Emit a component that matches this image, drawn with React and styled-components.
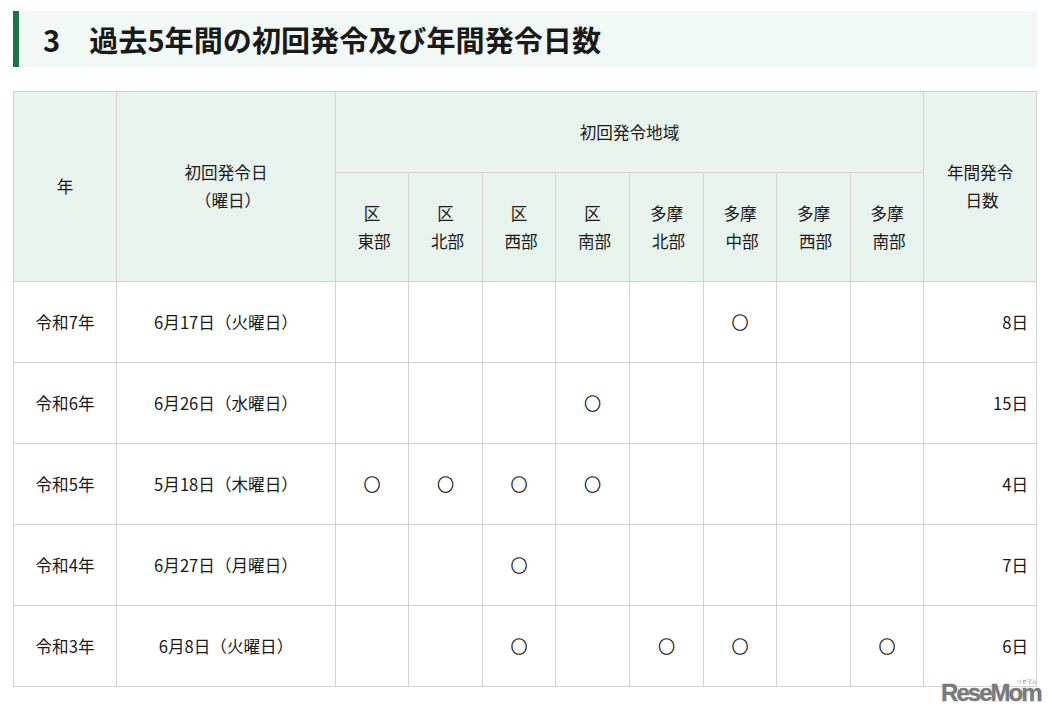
import React from 'react';
import styled, { createGlobalStyle } from 'styled-components';

const Global = createGlobalStyle`
  html, body { margin: 0; padding: 0; background: #fff; }
  body { font-family: "Noto Sans CJK JP", "Noto Sans", sans-serif; color: #1a1a1a; }
`;
const Page = styled.div`
  position: relative;
  width: 1052px;
  height: 715px;
  box-sizing: border-box;
  padding: 11px 15px 0 13px;
  overflow: hidden;
`;
const Heading = styled.h2`
  margin: 0 0 24px;
  height: 56px;
  box-sizing: border-box;
  padding: 2px 0 0 24px;
  background: #f1f8f5;
  border-left: 6px solid #1f7349;
  display: flex;
  align-items: center;
  font-size: 29.1px;
  font-weight: 700;
  line-height: 1;
  color: #1a1a1a;
  white-space: pre;
`;
const Table = styled.table`
  width: 1023px;
  border-collapse: collapse;
  table-layout: fixed;
  font-size: 16.6px;
  line-height: 28px;
`;
const Head = styled.th`
  background: #e9f3ee;
  border: 1px solid #d2d2d2;
  font-weight: 400;
  text-align: center;
  padding: 0;
  height: ${p => p.$h || 80}px;
  ${p => p.$shift ? `padding-bottom: ${p.$shift}px;` : ''}
`;
const SecondLine = styled.span`
  display: block;
  padding-left: 4px;
`;
const Cell = styled.td`
  border: 1px solid #d2d2d2;
  height: 80px;
  padding: ${p => p.$right ? '0 8px 0 0' : '0'};
  text-align: ${p => p.$right ? 'right' : 'center'};
`;
const Mark = styled.span`
  -webkit-text-stroke: 0.45px #1a1a1a;
`;
const Logo = styled.div`
  position: absolute;
  left: 941px;
  top: 684px;
  color: #7a7a7a;
  font-family: "Liberation Sans", sans-serif;
  font-weight: 700;
  font-size: 24px;
  line-height: 18px;
  letter-spacing: -1.95px;
  -webkit-text-stroke: 0.4px #7a7a7a;
  white-space: nowrap;
`;
const LogoKana = styled.span`
  position: absolute;
  right: 4px;
  top: -6px;
  font-family: "Noto Sans CJK JP", sans-serif;
  font-size: 5px;
  line-height: 5px;
  font-weight: 400;
  letter-spacing: 0;
  -webkit-text-stroke: 0;
`;

const widths = [103, 219, 73, 74, 73, 74, 74, 73, 74, 73, 113];
const areas = [['区', '東部'], ['区', '北部'], ['区', '西部'], ['区', '南部'], ['多摩', '北部'], ['多摩', '中部'], ['多摩', '西部'], ['多摩', '南部']];
const rows = [
  ['令和7年', '6月17日（火曜日）', [5], '8日'],
  ['令和6年', '6月26日（水曜日）', [3], '15日'],
  ['令和5年', '5月18日（木曜日）', [0, 1, 2, 3], '4日'],
  ['令和4年', '6月27日（月曜日）', [2], '7日'],
  ['令和3年', '6月8日（火曜日）', [2, 4, 5, 7], '6日'],
];

export default function App() {
  return (
    <Page>
      <Global />
      <Heading>{'3　過去5年間の初回発令及び年間発令日数'}</Heading>
      <Table>
        <colgroup>{widths.map((w, i) => <col key={i} style={{ width: w }} />)}</colgroup>
        <thead>
          <tr>
            <Head rowSpan={2} $shift={2}>年</Head>
            <Head rowSpan={2} $shift={2}>初回発令日<SecondLine>（曜日）</SecondLine></Head>
            <Head colSpan={8}>初回発令地域</Head>
            <Head rowSpan={2} $shift={2}>年間発令<SecondLine>日数</SecondLine></Head>
          </tr>
          <tr>
            {areas.map(([a, b], i) => <Head key={i} $h={108}>{a}<SecondLine>{b}</SecondLine></Head>)}
          </tr>
        </thead>
        <tbody>
          {rows.map(([y, d, marks, n]) => (
            <tr key={y}>
              <Cell>{y}</Cell>
              <Cell>{d}</Cell>
              {areas.map((_, i) => <Cell key={i}>{marks.includes(i) ? <Mark>○</Mark> : null}</Cell>)}
              <Cell $right>{n}</Cell>
            </tr>
          ))}
        </tbody>
      </Table>
      <Logo>ReseMom<LogoKana>リセマム</LogoKana></Logo>
    </Page>
  );
}
